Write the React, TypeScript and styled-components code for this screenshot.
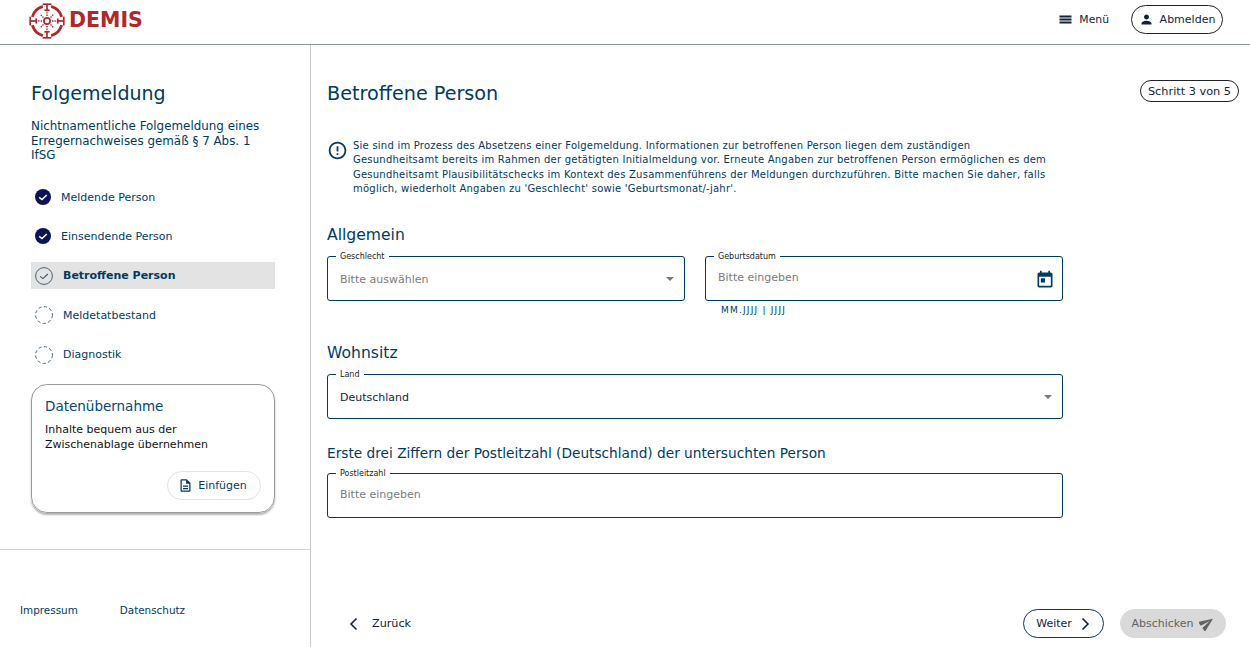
import React from "react";
import styled, { createGlobalStyle } from "styled-components";

const navy = "#003a63";
const ink = "#14233a";
const font = `"DejaVu Sans", Verdana, sans-serif`;

const Global = createGlobalStyle`
  html, body { margin: 0; padding: 0; height: 100%; background: #fff; overflow: hidden; }
  body { font-family: ${font}; color: ${navy}; }
  * { box-sizing: border-box; }
`;

const Page = styled.div`
  width: 1250px;
  height: 647px;
  display: flex;
  flex-direction: column;
`;

const Header = styled.header`
  height: 45px;
  flex: none;
  border-bottom: 1px solid #8a9a96;
  display: flex;
  align-items: center;
  padding: 0 27px 0 29px;
`;

const Brand = styled.div`
  display: flex;
  align-items: center;
  gap: 4px;
  color: #b2282a;
  font: bold 20.5px/1 ${font};
  margin-top: -3px;
`;

const Spacer = styled.div`
  flex: 1;
`;

const MenuItem = styled.div`
  display: flex;
  align-items: center;
  gap: 7px;
  font-size: 10.8px;
  color: ${ink};
  margin-right: 22px;
  margin-top: -6px;
`;

const LogoutButton = styled.div`
  width: 92px;
  height: 29px;
  margin-top: -6px;
  border: 1px solid #222;
  border-radius: 15px;
  display: flex;
  align-items: center;
  justify-content: center;
  gap: 6px;
  font-size: 11px;
  color: ${ink};
`;

const Body = styled.div`
  flex: 1;
  display: flex;
  min-height: 0;
`;

const Sidebar = styled.aside`
  width: 311px;
  flex: none;
  border-right: 1px solid #c9c9c9;
  display: flex;
  flex-direction: column;
`;

const SideTop = styled.div`
  height: 505px;
  flex: none;
  padding: 36px 35px 0 31px;
  border-bottom: 1px solid #d4d4d4;
`;

const SideTitle = styled.h1`
  margin: 0;
  font-size: 19px;
  font-weight: 400;
  line-height: 24px;
`;

const SideSub = styled.p`
  margin: 14px 0 0;
  font-size: 11.9px;
  line-height: 14.5px;
`;

const Steps = styled.ol`
  list-style: none;
  margin: 21px 0 0;
  padding: 0;
`;

const Step = styled.li<{ $current?: boolean; $pending?: boolean }>`
  height: 27px;
  margin-bottom: 12.4px;
  display: flex;
  align-items: center;
  gap: ${(p) => (p.$current || p.$pending ? "10px" : "9px")};
  padding-left: 4px;
  font-size: 11px;
  font-weight: ${(p) => (p.$current ? 700 : 400)};
  background: ${(p) => (p.$current ? "#e3e3e3" : "transparent")};
`;

const Card = styled.section`
  height: 129px;
  margin-top: 16.4px;
  border: 1px solid #9a9a9a;
  border-radius: 16px;
  box-shadow: 0 2px 2px rgba(0, 0, 0, 0.3);
  padding: 13px 13px 0;
  display: flex;
  flex-direction: column;
`;

const CardTitle = styled.h3`
  margin: 0;
  font-size: 13.5px;
  font-weight: 400;
  line-height: 17px;
  color: #00497a;
`;

const CardText = styled.p`
  margin: 7px 0 0;
  font-size: 11px;
  line-height: 15px;
  color: #111;
`;

const PasteButton = styled.div`
  align-self: flex-end;
  width: 94px;
  height: 29px;
  margin: 19px 0 0;
  border: 1px solid #e2e2e2;
  border-radius: 15px;
  display: flex;
  align-items: center;
  justify-content: center;
  gap: 5px;
  padding-right: 3px;
  font-size: 11px;
`;

const SideFoot = styled.div`
  flex: 1;
  padding: 54px 0 0 20px;
  display: flex;
  gap: 42px;
  font-size: 10.4px;
  line-height: 13px;
`;

const Main = styled.main`
  flex: 1;
  min-width: 0;
  padding: 36px 11px 9px 16px;
  display: flex;
  flex-direction: column;
`;

const TitleRow = styled.div`
  display: flex;
  align-items: flex-start;
  justify-content: space-between;
`;

const MainTitle = styled.h2`
  margin: 1px 0 0;
  font-size: 19.2px;
  font-weight: 400;
  line-height: 24px;
`;

const StepBadge = styled.div`
  width: 99px;
  height: 22px;
  margin-top: -1px;
  border: 1px solid #222;
  border-radius: 11px;
  display: flex;
  align-items: center;
  justify-content: center;
  font-size: 11.3px;
  color: ${ink};
`;

const Content = styled.div`
  width: 736px;
`;

const Notice = styled.div`
  display: flex;
  gap: 5px;
  margin: 33px 0 0 0;
  font-size: 10px;
  letter-spacing: 0.23px;
  line-height: 14.4px;
`;

const NoticeIcon = styled.svg`
  width: 21px;
  height: 21px;
  flex: none;
  margin-top: 1px;
  fill: ${navy};
`;

const NoticeText = styled.p`
  margin: 0;
  white-space: nowrap;
`;

const SectionTitle = styled.h3<{ $top: number }>`
  margin: ${(p) => p.$top}px 0 7px;
  font-size: 15.6px;
  font-weight: 400;
  line-height: 20px;
`;

const SubTitle = styled.h4`
  margin: 26px 0 7px;
  font-size: 13.7px;
  font-weight: 400;
  line-height: 17px;
`;

const Two = styled.div`
  display: grid;
  grid-template-columns: 358px 358px;
  gap: 20px;
`;

const Field = styled.fieldset`
  margin: 0;
  padding: 0 12px;
  height: 49px;
  border: 1px solid ${navy};
  border-radius: 3px;
  display: flex;
  align-items: center;
`;

const Legend = styled.legend`
  margin-left: -4px;
  padding: 0 4px;
  font-size: 8px;
  line-height: 10px;
  color: #222;
`;

const Value = styled.span<{ $kind: "placeholder" | "input" | "value" }>`
  flex: 1;
  font-size: 11px;
  margin-top: ${(p) => (p.$kind === "input" ? "-6px" : "-2px")};
  color: ${(p) => (p.$kind === "value" ? ink : "#7b7b7b")};
`;

const Caret = styled.span`
  width: 0;
  height: 0;
  margin: -3px -2px 0 0;
  border-left: 4px solid transparent;
  border-right: 4px solid transparent;
  border-top: 4px solid #777;
`;

const CalendarIcon = styled.svg`
  width: 20px;
  height: 20px;
  flex: none;
  margin: -2px -5px 0 0;
  fill: ${navy};
`;

const Hint = styled.div`
  margin: 4px 0 0 16px;
  font-size: 9px;
  letter-spacing: 1.2px;
  line-height: 11px;
`;

const Actions = styled.div`
  margin-top: auto;
  margin-right: 13px;
  display: flex;
  align-items: center;
`;

const BackButton = styled.div`
  display: flex;
  align-items: center;
  gap: 12px;
  margin-left: 21px;
  font-size: 11.2px;
  color: ${ink};
`;

const Pill = styled.div<{ $disabled?: boolean }>`
  height: 29px;
  width: ${(p) => (p.$disabled ? "106px" : "81px")};
  margin-left: ${(p) => (p.$disabled ? "16px" : "0")};
  border: 1px solid ${(p) => (p.$disabled ? "#d9d9d9" : navy)};
  border-radius: 15px;
  background: ${(p) => (p.$disabled ? "#d9d9d9" : "#fff")};
  color: ${(p) => (p.$disabled ? "#626262" : ink)};
  display: flex;
  align-items: center;
  justify-content: center;
  gap: ${(p) => (p.$disabled ? "5px" : "7px")};
  font-size: 11px;
`;

const Icon = styled.svg<{ $size: number }>`
  width: ${(p) => p.$size}px;
  height: ${(p) => p.$size}px;
  flex: none;
  fill: currentColor;
`;

const SendIcon = styled.svg`
  width: 16px;
  height: 16px;
  flex: none;
  margin-top: -2px;
  fill: currentColor;
`;

const DoneIcon = styled.svg`
  width: 18px;
  height: 18px;
  margin-left: -1px;
  flex: none;
`;

const Logo = () => {
  const arcs = [45, 135, 225, 315];
  const bars = [0, 90, 180, 270];
  const spokes = [0, 45, 90, 135, 180, 225, 270, 315];
  return (
    <svg width="36" height="36" viewBox="-18 -18 36 36" aria-hidden="true">
      <g fill="none" stroke="#b2282a">
        {arcs.map((a) => (
          <path key={a} d="M-7.4 -13.3 A15.2 15.2 0 0 1 7.4 -13.3" strokeWidth="2.8" transform={`rotate(${a})`} />
        ))}
        {bars.map((a) => (
          <g key={a} transform={`rotate(${a})`} strokeWidth="1.7">
            <path d="M-4.4 -16.8 H4.4" />
            <path d="M0 -16.8 V-10.6" />
            <path d="M-2.6 -10.8 H2.6" />
          </g>
        ))}
        <circle r="3.1" strokeWidth="1.7" />
        {spokes.map((a) => (
          <path key={a} d="M0 -5 V-10" strokeWidth="1.4" strokeDasharray="1.4 1" transform={`rotate(${a})`} />
        ))}
      </g>
    </svg>
  );
};

const Done = () => (
  <DoneIcon viewBox="0 0 18 18" aria-hidden="true">
    <circle cx="9" cy="9" r="8" fill="#0c1454" />
    <path d="M5.2 9.4 L8 11.6 L12.8 7" fill="none" stroke="#fff" strokeWidth="1.4" />
  </DoneIcon>
);

const Current = () => (
  <svg width="18" height="18" viewBox="0 0 18 18" aria-hidden="true">
    <circle cx="9" cy="9" r="8.4" fill="none" stroke="#33566f" strokeWidth="0.9" />
    <path d="M5.2 9.4 L8 11.6 L12.8 7" fill="none" stroke="#33566f" strokeWidth="1.1" />
  </svg>
);

const Pending = () => (
  <svg width="18" height="18" viewBox="0 0 18 18" aria-hidden="true">
    <circle cx="9" cy="9" r="8.4" fill="none" stroke="#33566f" strokeWidth="0.9" strokeDasharray="3.3 2.3" />
  </svg>
);

const Chevron = ({ d }: { d: string }) => (
  <svg width="12" height="14" viewBox="0 0 12 14" aria-hidden="true">
    <path d={d} fill="none" stroke={ink} strokeWidth="1.6" />
  </svg>
);

export default function App() {
  return (
    <Page>
      <Global />
      <Header>
        <Brand>
          <Logo />
          <span>DEMIS</span>
        </Brand>
        <Spacer />
        <MenuItem>
          <Icon $size={13} viewBox="0 0 13 13">
            <path d="M0.5 2.5h12v2h-12zM0.5 5.5h12v2h-12zM0.5 8.5h12v2h-12z" />
          </Icon>
          Menü
        </MenuItem>
        <LogoutButton>
          <Icon $size={15} viewBox="0 0 24 24">
            <path d="M12 12c2.21 0 4-1.79 4-4s-1.79-4-4-4-4 1.79-4 4 1.79 4 4 4zm0 2c-2.67 0-8 1.34-8 4v2h16v-2c0-2.66-5.33-4-8-4z" />
          </Icon>
          Abmelden
        </LogoutButton>
      </Header>
      <Body>
        <Sidebar>
          <SideTop>
            <SideTitle>Folgemeldung</SideTitle>
            <SideSub>Nichtnamentliche Folgemeldung eines Erregernachweises gemäß § 7 Abs. 1 IfSG</SideSub>
            <Steps>
              <Step><Done />Meldende Person</Step>
              <Step><Done />Einsendende Person</Step>
              <Step $current><Current />Betroffene Person</Step>
              <Step $pending><Pending />Meldetatbestand</Step>
              <Step $pending><Pending />Diagnostik</Step>
            </Steps>
            <Card>
              <CardTitle>Datenübernahme</CardTitle>
              <CardText>Inhalte bequem aus der<br />Zwischenablage übernehmen</CardText>
              <PasteButton>
                <Icon $size={15} viewBox="0 0 24 24">
                  <path d="M8 16h8v2H8zm0-4h8v2H8zm6-10H6c-1.1 0-2 .9-2 2v16c0 1.1.89 2 1.99 2H18c1.1 0 2-.9 2-2V8l-6-6zm4 18H6V4h7v5h5v11z" />
                </Icon>
                Einfügen
              </PasteButton>
            </Card>
          </SideTop>
          <SideFoot>
            <span>Impressum</span>
            <span>Datenschutz</span>
          </SideFoot>
        </Sidebar>
        <Main>
          <TitleRow>
            <MainTitle>Betroffene Person</MainTitle>
            <StepBadge>Schritt 3 von 5</StepBadge>
          </TitleRow>
          <Content>
            <Notice>
              <NoticeIcon viewBox="0 0 24 24">
                <path d="M11 15h2v2h-2zm0-8h2v6h-2zm.99-5C6.47 2 2 6.48 2 12s4.47 10 9.99 10C17.52 22 22 17.52 22 12S17.52 2 11.99 2zM12 20c-4.42 0-8-3.58-8-8s3.58-8 8-8 8 3.58 8 8-3.58 8-8 8z" />
              </NoticeIcon>
              <NoticeText>
                Sie sind im Prozess des Absetzens einer Folgemeldung. Informationen zur betroffenen Person liegen dem zuständigen<br />
                Gesundheitsamt bereits im Rahmen der getätigten Initialmeldung vor. Erneute Angaben zur betroffenen Person ermöglichen es dem<br />
                Gesundheitsamt Plausibilitätschecks im Kontext des Zusammenführens der Meldungen durchzuführen. Bitte machen Sie daher, falls<br />
                möglich, wiederholt Angaben zu 'Geschlecht' sowie 'Geburtsmonat/-jahr'.
              </NoticeText>
            </Notice>
            <SectionTitle $top={28}>Allgemein</SectionTitle>
            <Two>
              <Field>
                <Legend>Geschlecht</Legend>
                <Value $kind="placeholder">Bitte auswählen</Value>
                <Caret />
              </Field>
              <div>
                <Field>
                  <Legend>Geburtsdatum</Legend>
                  <Value $kind="input">Bitte eingeben</Value>
                  <CalendarIcon viewBox="0 0 24 24">
                    <path d="M19 3h-1V1h-2v2H8V1H6v2H5c-1.11 0-1.99.9-1.99 2L3 19c0 1.1.89 2 2 2h14c1.1 0 2-.9 2-2V5c0-1.1-.9-2-2-2zm0 16H5V8h14v11zM7 10h5v5H7z" />
                  </CalendarIcon>
                </Field>
                <Hint>MM.JJJJ | JJJJ</Hint>
              </div>
            </Two>
            <SectionTitle $top={27}>Wohnsitz</SectionTitle>
            <Field>
              <Legend>Land</Legend>
              <Value $kind="value">Deutschland</Value>
              <Caret />
            </Field>
            <SubTitle>Erste drei Ziffern der Postleitzahl (Deutschland) der untersuchten Person</SubTitle>
            <Field>
              <Legend>Postleitzahl</Legend>
              <Value $kind="input">Bitte eingeben</Value>
            </Field>
          </Content>
          <Actions>
            <BackButton>
              <Chevron d="M8.5 1.5 L3 7 L8.5 12.5" />
              Zurück
            </BackButton>
            <Spacer />
            <Pill>
              Weiter
              <Chevron d="M3.5 1.5 L9 7 L3.5 12.5" />
            </Pill>
            <Pill $disabled>
              Abschicken
              <SendIcon viewBox="0 0 24 24">
                <path transform="rotate(-35 12 12)" d="M2.01 21L23 12 2.01 3 2 10l15 2-15 2z" />
              </SendIcon>
            </Pill>
          </Actions>
        </Main>
      </Body>
    </Page>
  );
}
